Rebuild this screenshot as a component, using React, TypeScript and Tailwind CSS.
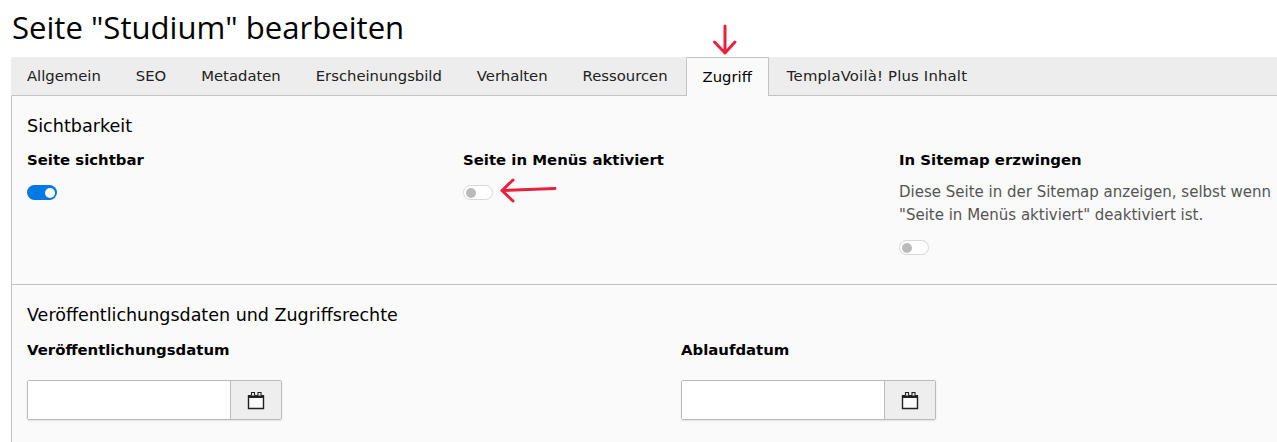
import { ReactNode } from 'react';

const tabs = ['Allgemein', 'SEO', 'Metadaten', 'Erscheinungsbild', 'Verhalten', 'Ressourcen', 'Zugriff', 'TemplaVoilà! Plus Inhalt'];

function Toggle({ on = false }: { on?: boolean }) {
  if (on) {
    return (
      <div className="flex h-[15px] w-[30px] items-center justify-end rounded-full bg-[#0078e6] pr-[2px]">
        <div className="h-[10px] w-[10px] rounded-full bg-white" />
      </div>
    );
  }
  return (
    <div className="flex h-[15px] w-[30px] items-center rounded-full border border-[#d7d7d7] bg-white pl-[2px]">
      <div className="h-[10px] w-[10px] rounded-full bg-[#bbbbbb]" />
    </div>
  );
}

function Label({ children }: { children: ReactNode }) {
  return <div className="text-[14.9px] leading-[20px] font-bold text-black">{children}</div>;
}

function DateField() {
  return (
    <div className="flex h-[40px] w-[255px] rounded-[2px] border border-[#bbbbbb] shadow-[0_1px_2px_rgba(0,0,0,0.1)]">
      <div className="w-[202px] bg-white" />
      <div className="flex flex-1 items-center justify-center border-l border-[#bbbbbb] bg-[#eeeeee]">
        <svg width="18" height="19" viewBox="0 0 18 19" fill="none" stroke="#212121">
          <path d="M1.5 5h15v12.5h-15z" fill="#fafafa" strokeWidth="1.4" />
          <path d="M1 4h16v3H1z" fill="#212121" stroke="none" />
          <path d="M4.5 4.5v-3h3v3M11 4.5v-3h3v3" fill="#eeeeee" strokeWidth="1.1" />
        </svg>
      </div>
    </div>
  );
}

export default function App() {
  return (
    <div className="h-[442px] w-[1277px] overflow-hidden bg-white font-['DejaVu_Sans',sans-serif]">
      <h1 className="h-[57px] pt-[5px] pl-[12px] font-['Open_Sans',sans-serif] text-[31.1px] leading-[44px] text-black">
        Seite "Studium" bearbeiten
      </h1>
      <div className="ml-[11px]">
        <div className="flex h-[39px] rounded-tl-[2px] border-b border-l border-b-[#c3c3c3] border-l-[#ededed] bg-[#ededed]">
          <div className="-ml-[2.5px] flex">
            {tabs.map((tab) =>
              tab === 'Zugriff' ? (
                <div
                  key={tab}
                  className="mx-[0.5px] h-[39px] rounded-t-[2px] border border-b-0 border-[#c3c3c3] bg-[#fafafa] px-[16px] text-[14.8px] leading-[38px] text-black"
                >
                  {tab}
                </div>
              ) : (
                <div
                  key={tab}
                  className={`border-x border-transparent px-[16.5px] text-[14.8px] leading-[38px] text-[#212121] ${tab.startsWith('Templa') ? 'tracking-[0.2px]' : ''}`}
                >
                  {tab}
                </div>
              ),
            )}
          </div>
        </div>
        <div className="border-l border-[#c3c3c3] bg-[#fafafa]">
          <section className="h-[189px] border-b border-[#c3c3c3] pt-[19px] pl-[15px]">
            <h2 className="text-[17.6px] leading-[22px] text-black">Sichtbarkeit</h2>
            <div className="mt-[13px] grid grid-cols-[436px_436px_436px]">
              <div>
                <Label>Seite sichtbar</Label>
                <div className="mt-[15px]">
                  <Toggle on />
                </div>
              </div>
              <div>
                <Label>Seite in Menüs aktiviert</Label>
                <div className="mt-[15px]">
                  <Toggle />
                </div>
              </div>
              <div>
                <Label>In Sitemap erzwingen</Label>
                <p className="mt-[11px] text-[15px] leading-[23px] text-[#555555]">
                  Diese Seite in der Sitemap anzeigen, selbst wenn
                  <br />
                  "Seite in Menüs aktiviert" deaktiviert ist.
                </p>
                <div className="mt-[13px]">
                  <Toggle />
                </div>
              </div>
            </div>
          </section>
          <section className="h-[157px] pt-[19px] pl-[15px]">
            <h2 className="text-[17.5px] leading-[22px] text-black">Veröffentlichungsdaten und Zugriffsrechte</h2>
            <div className="mt-[14px] grid grid-cols-[654px_654px]">
              <div>
                <Label>Veröffentlichungsdatum</Label>
                <div className="mt-[20px]">
                  <DateField />
                </div>
              </div>
              <div>
                <Label>Ablaufdatum</Label>
                <div className="mt-[20px]">
                  <DateField />
                </div>
              </div>
            </div>
          </section>
        </div>
      </div>
      {/* red annotation arrows */}
      <svg className="absolute top-[24px] left-[712px]" width="26" height="32" viewBox="0 0 26 32" fill="none" stroke="#e8213f" strokeWidth="3" strokeLinecap="round" strokeLinejoin="round">
        <path d="M13 2v27M2.5 18 13 29 23 18" />
      </svg>
      <svg className="absolute top-[176px] left-[498px]" width="62" height="30" viewBox="0 0 62 30" fill="none" stroke="#e8213f" strokeWidth="3" strokeLinecap="round" strokeLinejoin="round">
        <path d="M57 12.5 5 14.5M15 4 4 14.5 15 25" />
      </svg>
    </div>
  );
}
